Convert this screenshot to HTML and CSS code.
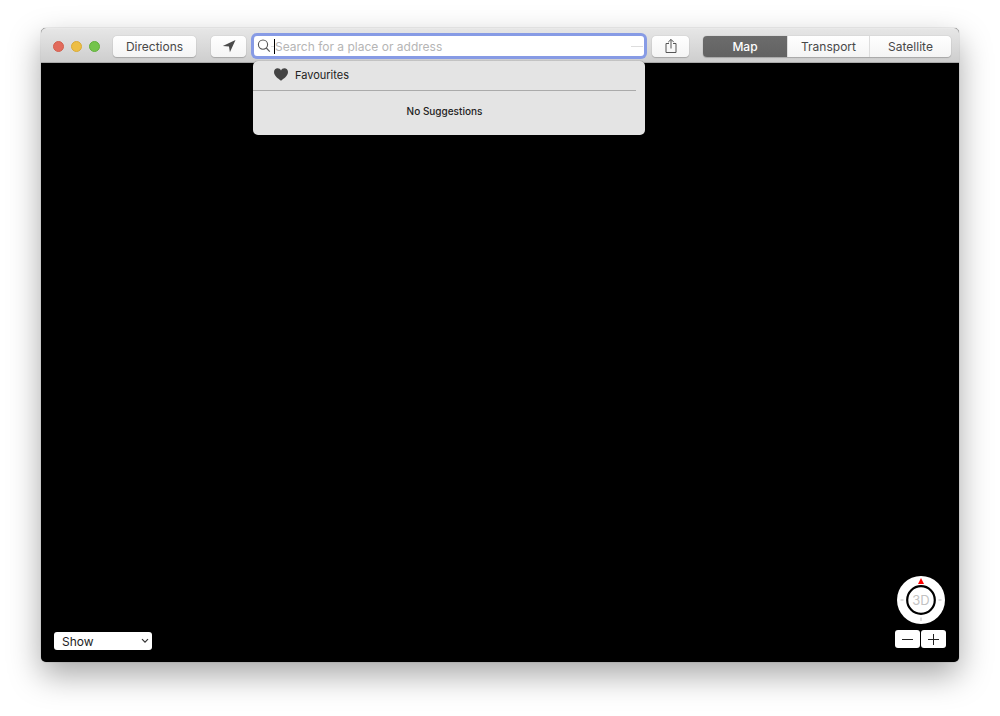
FILE: index.html
```html
<!DOCTYPE html>
<html lang="en">
<head>
    <meta charset="UTF-8">
    <title>Maps</title>
    <link rel="stylesheet" href="styles.css">
</head>
<body>
    <div class="window">
        <header class="toolbar">
            <div class="lights">
                <button class="light close" aria-label="Close"></button>
                <button class="light minimise" aria-label="Minimise"></button>
                <button class="light zoom" aria-label="Zoom"></button>
            </div>
            <button class="btn directions">Directions</button>
            <button class="btn locate" aria-label="Current location">
                <svg width="14" height="14" viewBox="0 0 14 14"><path d="M13.5 1 0.8 7 7 7.5 7.9 13.3z" fill="#4a4a4a"/></svg>
            </button>

            <div class="search">
                <div class="search-field">
                    <svg width="14" height="14" viewBox="0 0 14 14" fill="none" stroke="#555" stroke-width="1.1">
                        <circle cx="6" cy="5.6" r="4.6"/>
                        <path d="M9.3 9 12.8 12.6"/>
                    </svg>
                    <span class="dash short"></span>
                    <span class="caret"></span>
                    <input type="text" placeholder="Search for a place or address" aria-label="Search for a place or address">
                    <span class="dash"></span>
                </div>
                <div class="suggestions">
                    <a class="favourites" href="#">
                        <svg width="14" height="13" viewBox="0 0 14 13"><path d="M7 12.7C4.6 10.9 0 8.2 0 4.1 0 1.8 1.6 0.3 3.6 0.3 5.1 0.3 6.4 1.1 7 2.4 7.6 1.1 8.9 0.3 10.4 0.3 12.4 0.3 14 1.8 14 4.1 14 8.2 9.4 10.9 7 12.7z" fill="#444"/></svg>
                        Favourites
                    </a>
                    <p class="empty">No Suggestions</p>
                </div>
            </div>

            <button class="btn share" aria-label="Share">
                <svg width="12" height="16" viewBox="0 0 12 16" fill="none" stroke="#555" stroke-width="1">
                    <path d="M4 5.5H1V14.5H11V5.5H8"/>
                    <path d="M6 10.5V1.5M3.2 4.2 6 1.4 8.8 4.2"/>
                </svg>
            </button>

            <div class="segments">
                <button class="segment active">Map</button>
                <button class="segment">Transport</button>
                <button class="segment">Satellite</button>
            </div>
        </header>

        <main class="map">
            <div class="show-box">
                <select class="show" aria-label="Show">
                    <option>Show</option>
                </select>
                <svg width="8" height="6" viewBox="0 0 8 6" fill="none" stroke="#333" stroke-width="1.2"><path d="M1 1.2 4 4.2 7 1.2"/></svg>
            </div>

            <div class="controls">
                <button class="compass" aria-label="3D">
                    <svg width="48" height="48" viewBox="0 0 48 48">
                        <circle cx="24" cy="24" r="24" fill="#fff"/>
                        <circle cx="24" cy="24" r="13.8" fill="#fff" stroke="#000" stroke-width="2.2"/>
                        <path d="M24 2 27 8H21z" fill="#f00"/>
                        <path d="M24 41.5V45M3.5 24H6.5M41.5 24H44.5" stroke="#bbb" stroke-width="1"/>
                        <text class="compass-label" x="24" y="29" text-anchor="middle">3D</text>
                    </svg>
                </button>
                <div class="zoom-buttons">
                    <button class="zoom-btn" aria-label="Zoom out">
                        <svg width="11" height="11" viewBox="0 0 11 11" stroke="#222"><path d="M0 5.5H11"/></svg>
                    </button>
                    <button class="zoom-btn" aria-label="Zoom in">
                        <svg width="11" height="11" viewBox="0 0 11 11" stroke="#222"><path d="M0 5.5H11M5.5 0V11"/></svg>
                    </button>
                </div>
            </div>
        </main>
    </div>
</body>
</html>
```
FILE: styles.css
```css
* {
    box-sizing: border-box;
}
body {
    margin: 0;
    padding: 28px 41px 54px;
    min-height: 100vh;
    display: flex;
    background: #fff;
    font-family: Inter, "Liberation Sans", sans-serif;
    font-size: 12px;
    color: #222;
}
button, input, select {
    font: inherit;
    color: inherit;
    border: 0;
    padding: 0;
    margin: 0;
}
svg {
    display: block;
}
.window {
    flex: 1;
    display: flex;
    flex-direction: column;
    border-radius: 5px;
    background: #000;
    box-shadow: 0 0 1px rgba(0,0,0,0.6), 0 13px 32px rgba(0,0,0,0.35);
}
.toolbar {
    display: flex;
    align-items: center;
    height: 35px;
    padding: 1px 8px 0 12px;
    border-radius: 5px 5px 0 0;
    border-top: 1px solid #e9e9e9;
    border-bottom: 1px solid #aaa;
    background: linear-gradient(#e6e6e6, #cecece);
}
.lights {
    display: flex;
    gap: 7px;
    margin-right: 13px;
}
.light {
    width: 11px;
    height: 11px;
    border-radius: 50%;
}
.close {
    background: #e26b5c;
    border: 1px solid #d2604f;
}
.minimise {
    background: #edbe44;
    border: 1px solid #d9ab38;
}
.zoom {
    background: #74c44c;
    border: 1px solid #62b03c;
}
.btn {
    display: flex;
    align-items: center;
    justify-content: center;
    height: 21px;
    border-radius: 4px;
    background: linear-gradient(#fff, #f4f4f4);
    box-shadow: 0 0 1px rgba(0,0,0,0.3), 0 1px 1px rgba(0,0,0,0.18);
    color: #484848;
}
.directions {
    width: 83px;
    margin-right: 15px;
}
.locate {
    width: 35px;
    margin-right: 8px;
}
.search {
    position: relative;
    flex: 1;
    margin-right: 8px;
}
.search-field {
    display: flex;
    align-items: center;
    height: 20px;
    padding: 0 1px 0 3px;
    border-radius: 3px;
    background: #fff;
    box-shadow: 0 0 0 3px #879be5;
}
.search-field input {
    flex: 1;
    min-width: 0;
    background: none;
    outline: none;
}
.search-field input::placeholder {
    color: #b5b5b5;
    opacity: 1;
}
.caret {
    width: 1px;
    height: 15px;
    background: #000;
}
.dash {
    width: 12px;
    height: 1px;
    background: #ddd;
}
.dash.short {
    width: 3px;
}
.suggestions {
    position: absolute;
    top: 25px;
    left: -1px;
    right: -1px;
    border-radius: 5px;
    background: #e4e4e4;
    box-shadow: 0 0 1px rgba(0,0,0,0.6);
    padding: 0 9px 4px 0;
    font-size: 11px;
}
.favourites {
    display: flex;
    align-items: center;
    gap: 7px;
    height: 30px;
    padding: 0 0 2px 21px;
    border-bottom: 1px solid #aaa;
    color: #222;
    text-decoration: none;
}
.empty {
    margin: 0;
    font-size: 10px;
    font-weight: 500;
    line-height: 40px;
    text-align: center;
}
.share {
    width: 37px;
    margin-right: 14px;
}
.segments {
    display: flex;
    height: 21px;
    border-radius: 4px;
    overflow: hidden;
    box-shadow: 0 0 1px rgba(0,0,0,0.3), 0 1px 1px rgba(0,0,0,0.18);
}
.segment {
    width: 82px;
    background: linear-gradient(#fff, #f4f4f4);
    color: #484848;
}
.segment + .segment {
    border-left: 1px solid #ddd;
}
.segment.active {
    width: 84px;
    background: linear-gradient(#6c6c6c, #626262);
    color: #fff;
    font-weight: 500;
}
.map {
    flex: 1;
    display: flex;
    justify-content: space-between;
    align-items: flex-end;
    padding: 12px 13px;
}
.show-box {
    display: grid;
    align-items: center;
}
.show-box > * {
    grid-area: 1 / 1;
}
.show-box svg {
    justify-self: end;
    margin-right: 3px;
    pointer-events: none;
}
.show {
    appearance: none;
    width: 98px;
    height: 18px;
    padding-left: 8px;
    border-radius: 3px;
    background: #fff;
}
.controls {
    display: flex;
    flex-direction: column;
    align-items: center;
    gap: 6px;
    padding-bottom: 2px;
}
.compass {
    background: none;
}
.compass-label {
    font-size: 13px;
    fill: #c2c2c2;
}
.zoom-buttons {
    display: flex;
    gap: 1px;
}
.zoom-btn {
    display: flex;
    align-items: center;
    justify-content: center;
    width: 25px;
    height: 18px;
    border-radius: 3px;
    background: #fff;
}
```
